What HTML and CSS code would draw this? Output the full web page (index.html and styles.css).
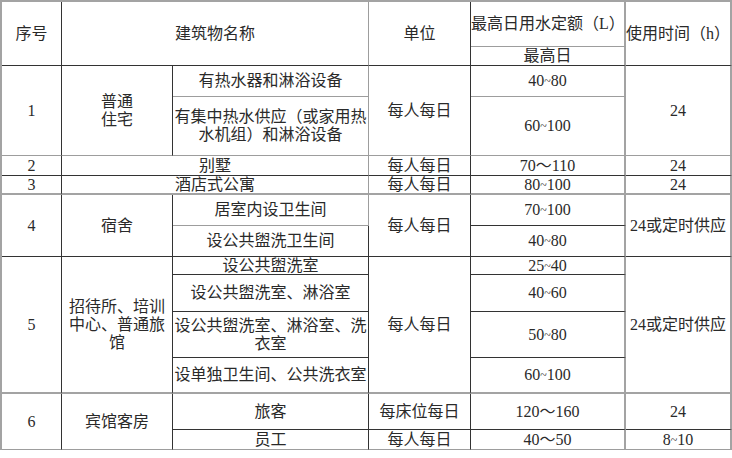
FILE: index.html
```html
<!DOCTYPE html>
<html lang="zh-CN">
<head>
<meta charset="utf-8">
<title>最高日用水定额</title>
<link rel="stylesheet" href="styles.css">
</head>
<body>
<div class="tbl">
  <div class="cell rs2">序号</div>
  <div class="cell rs2 cs2 rg">建筑物名称</div>
  <div class="cell rs2">单位</div>
  <div class="cell q bg">最高日用水定额（L）</div>
  <div class="cell rs2 t">使用时间（h）</div>
  <div class="cell q">最高日</div>

  <div class="cell rs2 bg">1</div>
  <div class="cell rs2 bg">普通<br>住宅</div>
  <div class="cell bg rg">有热水器和淋浴设备</div>
  <div class="cell rs2 bg">每人每日</div>
  <div class="cell q bg">40<span class="tl">~</span>80</div>
  <div class="cell rs2 t bg">24</div>
  <div class="cell bg rg">有集中热水供应（或家用热水机组）和淋浴设备</div>
  <div class="cell q bg">60<span class="tl">~</span>100</div>

  <div class="cell">2</div>
  <div class="cell cs2 rg">别墅</div>
  <div class="cell">每人每日</div>
  <div class="cell q">70～110</div>
  <div class="cell t">24</div>

  <div class="cell b2">3</div>
  <div class="cell cs2 rg b2">酒店式公寓</div>
  <div class="cell b2">每人每日</div>
  <div class="cell q b2">80<span class="tl">~</span>100</div>
  <div class="cell t b2">24</div>

  <div class="cell rs2">4</div>
  <div class="cell rs2">宿舍</div>
  <div class="cell bg rg">居室内设卫生间</div>
  <div class="cell rs2">每人每日</div>
  <div class="cell q">70<span class="tl">~</span>100</div>
  <div class="cell rs2 t">24或定时供应</div>
  <div class="cell">设公共盥洗卫生间</div>
  <div class="cell q">40<span class="tl">~</span>80</div>

  <div class="cell rs4 b2">5</div>
  <div class="cell rs4 b2">招待所、培训中心、普通旅馆</div>
  <div class="cell">设公共盥洗室</div>
  <div class="cell rs4 b2">每人每日</div>
  <div class="cell q">25<span class="tl">~</span>40</div>
  <div class="cell rs4 t b2">24或定时供应</div>
  <div class="cell">设公共盥洗室、淋浴室</div>
  <div class="cell q">40<span class="tl">~</span>60</div>
  <div class="cell">设公共盥洗室、淋浴室、洗衣室</div>
  <div class="cell q">50<span class="tl">~</span>80</div>
  <div class="cell b2">设单独卫生间、公共洗衣室</div>
  <div class="cell q b2">60<span class="tl">~</span>100</div>

  <div class="cell rs2 bg">6</div>
  <div class="cell rs2 bg">宾馆客房</div>
  <div class="cell">旅客</div>
  <div class="cell">每床位每日</div>
  <div class="cell q">120～160</div>
  <div class="cell t">24</div>
  <div class="cell bg">员工</div>
  <div class="cell bg">每人每日</div>
  <div class="cell q bg">40～50</div>
  <div class="cell t bg">8<span class="tl">~</span>10</div>
</div>
</body>
</html>
```
FILE: styles.css
```css
html, body {
  margin: 0;
  padding: 0;
  background: #ffffff;
}

.tbl {
  display: grid;
  width: max-content;
  grid-template-columns: 60px 111px 196px 102px 155px 106px;
  grid-template-rows: 45px 19px 31px 59px 20px 19px 31px 31px 18px 37px 46px 36px 36px 20px;
  border-top: 2px solid #a3a3a3;
  border-left: 2px solid #a3a3a3;
  font-family: "Liberation Serif", "Noto Sans CJK SC", serif;
  font-size: 16px;
  line-height: 18px;
  color: #2a2a2a;
}

.cell {
  box-sizing: border-box;
  display: flex;
  align-items: center;
  justify-content: center;
  text-align: center;
  border-right: 1px solid #333333;
  border-bottom: 1px solid #333333;
  overflow: visible;
  white-space: normal;
}

.rs2 { grid-row: span 2; }
.rs4 { grid-row: span 4; }
.cs2 { grid-column: span 2; }

.bg { border-bottom-color: #9d9d9d; }
.b2 { border-bottom: 2px solid #a3a3a3; }
.rg { border-right-color: #9d9d9d; }

.q, .t { border-right: 2px solid #a3a3a3; }

.tl {
  font-size: 12px;
  line-height: 1;
  vertical-align: 7px;
}
```
